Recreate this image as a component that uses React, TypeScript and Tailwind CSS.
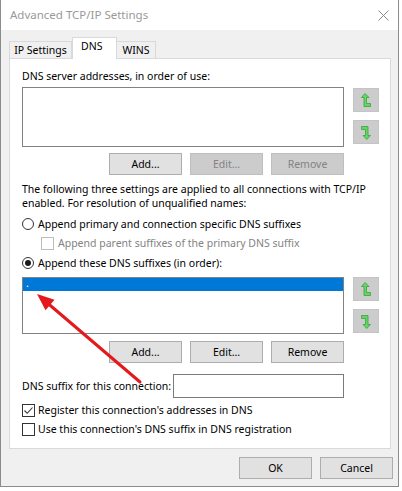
import React from "react";

function Btn({ label, disabled }: { label: string; disabled?: boolean }) {
  return (
    <div
      className={
        "h-[22px] w-[73px] flex items-center justify-center border text-[10.5px] leading-none " +
        (disabled
          ? "bg-[#cccccc] border-[#bfbfbf] text-[#838383]"
          : "bg-[#e1e1e1] border-[#adadad] text-black")
      }
    >
      {label}
    </div>
  );
}

function UpIcon() {
  return (
    <svg width="10" height="15" viewBox="0 0 10 15">
      <path
        d="M4 0.5 L0.5 4.5 L3 4.5 L3 13.5 L9.5 13.5 L9.5 10.5 L5.5 10.5 L5.5 4.5 L8 4.5 Z"
        fill="#62d862"
        stroke="#3f9f3f"
        strokeWidth="0.8"
        strokeLinejoin="round"
      />
    </svg>
  );
}

function DownIcon() {
  return (
    <svg width="10" height="15" viewBox="0 0 10 15">
      <path
        d="M0.5 1.5 L0.5 4.5 L4.5 4.5 L4.5 10.5 L2 10.5 L5.75 14.5 L9.5 10.5 L7 10.5 L7 1.5 Z"
        fill="#62d862"
        stroke="#3f9f3f"
        strokeWidth="0.8"
        strokeLinejoin="round"
      />
    </svg>
  );
}

function ArrowBtn({ children }: { children: React.ReactNode }) {
  return (
    <div className="h-[24px] w-[26px] bg-[#cccccc] border border-[#c4c4c4] flex items-center justify-center">
      {children}
    </div>
  );
}

function Radio({ checked }: { checked?: boolean }) {
  return (
    <div className="w-[12px] h-[12px] rounded-full border border-[#333333] bg-white flex items-center justify-center shrink-0">
      {checked && <div className="w-[6px] h-[6px] rounded-full bg-[#1a1a1a]" />}
    </div>
  );
}

function Check({ checked, disabled }: { checked?: boolean; disabled?: boolean }) {
  return (
    <div
      className={
        "w-[13px] h-[13px] border bg-white flex items-center justify-center shrink-0 " +
        (disabled ? "border-[#bcbcbc]" : "border-[#333333]")
      }
    >
      {checked && (
        <svg width="11" height="11" viewBox="0 0 11 11">
          <path d="M1.5 5.5 L4.2 8.3 L9.5 2.5" fill="none" stroke="#333333" strokeWidth="1.1" />
        </svg>
      )}
    </div>
  );
}

export default function App() {
  return (
    <div className="w-[402px] h-[491px] bg-white relative overflow-hidden font-['Noto_Sans',sans-serif] text-[10.5px] leading-[15px] text-black whitespace-nowrap">
      <div className="w-[399px] h-[487px] border border-t-0 border-[#8c8c8c] flex flex-col">
        {/* title bar */}
        <div className="h-[30px] shrink-0 bg-white flex items-center justify-between pl-[9px] pr-[8px]">
          <span className="text-[11.5px] text-[#999999] leading-none">Advanced TCP/IP Settings</span>
          <svg width="11" height="11" viewBox="0 0 11 11" className="mr-[1px]">
            <path d="M0.5 0.5 L10.5 10.5 M10.5 0.5 L0.5 10.5" stroke="#8a8a8a" strokeWidth="1" />
          </svg>
        </div>
        {/* body */}
        <div className="flex-1 bg-[#f0f0f0] flex flex-col">
          {/* tabs */}
          <div className="mt-[7px] ml-[8px] h-[21px] flex items-end">
            <div className="h-[17px] w-[63px] border border-b-0 border-[#d9d9d9] bg-[#f0f0f0] flex items-center justify-center pt-[1px]">
              IP Settings
            </div>
            <div className="relative z-10 h-[22px] -mb-[1px] w-[45px] border border-b-0 border-[#d9d9d9] bg-white flex items-start pl-[8px] pt-[1px]">
              DNS
            </div>
            <div className="h-[17px] w-[39px] border border-b-0 border-l-0 border-[#d9d9d9] bg-[#f0f0f0] flex items-center justify-center pt-[1px]">
              WINS
            </div>
          </div>
          {/* panel */}
          <div className="ml-[8px] w-[382px] h-[391px] border border-[#d9d9d9] bg-white pl-[12px] flex flex-col">
            <div className="mt-[10px]">DNS server addresses, in order of use:</div>
            <div className="mt-[3px] flex">
              <div className="w-[322px] h-[60px] border border-[#828282] bg-white" />
              <div className="ml-[9px] mt-[1px] flex flex-col gap-[8px]">
                <ArrowBtn>
                  <UpIcon />
                </ArrowBtn>
                <ArrowBtn>
                  <DownIcon />
                </ArrowBtn>
              </div>
            </div>
            <div className="mt-[6px] w-[322px] flex justify-end gap-[8px]">
              <Btn label="Add..." />
              <Btn label="Edit..." disabled />
              <Btn label="Remove" disabled />
            </div>
            <div className="mt-[8px] leading-[13.5px]">
              The following three settings are applied to all connections with TCP/IP
              <br />
              enabled. For resolution of unqualified names:
            </div>
            <div className="mt-[6px] h-[16px] flex items-center">
              <Radio />
              <span className="ml-[4px]">Append primary and connection specific DNS suffixes</span>
            </div>
            <div className="mt-[3px] h-[16px] flex items-center pl-[19px]">
              <Check disabled />
              <span className="ml-[4px] text-[#838383]">Append parent suffixes of the primary DNS suffix</span>
            </div>
            <div className="mt-[4px] h-[16px] flex items-center">
              <Radio checked />
              <span className="ml-[4px]">Append these DNS suffixes (in order):</span>
            </div>
            <div className="mt-[6px] flex">
              <div className="w-[322px] h-[57px] border border-[#828282] bg-white">
                <div className="h-[13px] bg-[#0078d7] text-white leading-[10px] pl-[3px]">.</div>
              </div>
              <div className="ml-[9px] flex flex-col gap-[8px]">
                <ArrowBtn>
                  <UpIcon />
                </ArrowBtn>
                <ArrowBtn>
                  <DownIcon />
                </ArrowBtn>
              </div>
            </div>
            <div className="mt-[7px] w-[322px] flex justify-end gap-[8px]">
              <Btn label="Add..." />
              <Btn label="Edit..." />
              <Btn label="Remove" />
            </div>
            <div className="mt-[11px] w-[322px] flex items-center justify-between">
              <span>DNS suffix for this connection:</span>
              <div className="w-[171px] h-[24px] border border-[#7a7a7a] bg-white" />
            </div>
            <div className="mt-[4px] h-[16px] flex items-center">
              <Check checked />
              <span className="ml-[3px]">Register this connection's addresses in DNS</span>
            </div>
            <div className="mt-[3px] h-[16px] flex items-center">
              <Check />
              <span className="ml-[3px]">Use this connection's DNS suffix in DNS registration</span>
            </div>
          </div>
          {/* footer */}
          <div className="mt-[8px] pr-[5px] flex justify-end gap-[8px]">
            <Btn label="OK" />
            <Btn label="Cancel" />
          </div>
        </div>
      </div>
      {/* red annotation arrow */}
      <svg className="absolute left-0 top-0 pointer-events-none" width="402" height="491" viewBox="0 0 402 491">
        <line x1="140" y1="382" x2="48" y2="303.5" stroke="#e3191b" strokeWidth="3" strokeLinecap="round" />
        <polygon points="37,294 54.5,299.8 45.5,310.2" fill="#e3191b" />
      </svg>
    </div>
  );
}
